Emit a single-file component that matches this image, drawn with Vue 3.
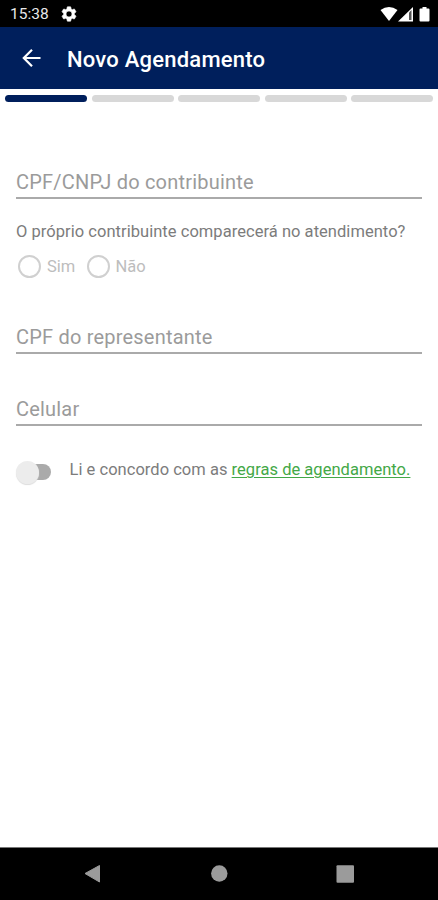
<template>
  <div class="screen">
    <div class="status">
      <span class="time">15:38</span>
      <svg class="gear" width="18" height="18" viewBox="0 0 24 24">
        <path fill="#fff" stroke="#fff" stroke-width=".8" d="M19.14 12.94c.04-.3.06-.61.06-.94s-.02-.64-.07-.94l2.03-1.58a.49.49 0 0 0 .12-.61l-1.92-3.32a.49.49 0 0 0-.59-.22l-2.39.96a7 7 0 0 0-1.62-.94l-.36-2.54a.48.48 0 0 0-.48-.41h-3.84a.47.47 0 0 0-.47.41l-.36 2.54c-.59.24-1.13.57-1.62.94l-2.39-.96a.48.48 0 0 0-.59.22L2.74 8.87a.48.48 0 0 0 .12.61l2.03 1.58c-.05.3-.09.63-.09.94s.02.64.07.94l-2.03 1.58a.49.49 0 0 0-.12.61l1.92 3.32c.12.22.37.29.59.22l2.39-.96c.5.38 1.03.7 1.62.94l.36 2.54c.05.24.24.41.48.41h3.84c.24 0 .44-.17.47-.41l.36-2.54a7 7 0 0 0 1.62-.94l2.39.96c.22.08.47 0 .59-.22l1.92-3.32a.47.47 0 0 0-.12-.61zM12 16a4 4 0 1 1 0-8 4 4 0 0 1 0 8z" />
      </svg>
      <svg class="signals" width="52" height="18" viewBox="0 0 52 18">
        <path fill="#fff" d="M.5 5Q9 -1.200 17.500 5L9 16z" />
        <path fill="#fff" d="M18 16.500 33 2v14.500z" />
        <path fill="#555" d="M29 7.500 31.500 5V15H29z" />
        <path fill="#fff" d="M40.500 3.500h2V2h4v1.500h2q1 0 1 1v11q0 1-1 1h-8q-1 0-1-1v-11q0-1 1-1z" />
      </svg>
    </div>
    <header class="toolbar">
      <svg class="back" width="20" height="20" viewBox="0 0 20 20">
        <path d="M18.500 10H2M10 1.800 1.800 10l8.200 8.200" fill="none" stroke="#fff" stroke-width="2.200" />
      </svg>
      <h1>Novo Agendamento</h1>
    </header>
    <div class="steps">
      <i v-for="n in 5" :key="n" :class="{ active: n === step }"></i>
    </div>
    <main class="form">
      <div class="field"><span>CPF/CNPJ do contribuinte</span></div>
      <p class="question">O próprio contribuinte comparecerá no atendimento?</p>
      <div class="radios">
        <div v-for="o in options" :key="o" class="radio"><i></i><span>{{ o }}</span></div>
      </div>
      <div class="field second"><span>CPF do representante</span></div>
      <div class="field third"><span>Celular</span></div>
      <div class="terms">
        <div class="switch"><i></i></div>
        <p>Li e concordo com as <a>regras de agendamento.</a></p>
      </div>
    </main>
    <nav class="navbar">
      <svg width="438" height="52" viewBox="0 0 438 52">
        <path fill="#9b9b9b" stroke="#9b9b9b" stroke-linejoin="round" d="M85 25.500 99.500 17.500v16.500z" />
        <circle fill="#9b9b9b" cx="219.300" cy="25.500" r="8.200" />
        <rect fill="#9b9b9b" x="336.500" y="17.300" width="17.500" height="17.500" rx="1" />
      </svg>
    </nav>
  </div>
</template>

<script setup>
import { ref } from 'vue'
const step = ref(1)
const options = ['Sim', 'Não']
</script>

<style>
body { margin: 0; background: #fff; }
</style>

<style scoped>
.screen { width: 438px; height: 900px; display: flex; flex-direction: column; overflow: hidden; background: #fff; font-family: Roboto, "Liberation Sans", sans-serif; }
.status { height: 27px; flex: none; display: flex; align-items: center; box-sizing: border-box; padding: 1px 6px 0 10px; background: #000; color: #e8e8e8; }
.time { width: 49.500px; font-size: 15.500px; line-height: 20px; white-space: nowrap; }
.gear { display: block; }
.signals { display: block; margin-left: auto; }
.toolbar { height: 62px; flex: none; display: flex; align-items: center; box-sizing: border-box; padding: 3px 0 0 22px; background: #001f5c; }
.back { display: block; margin-top: -3px; }
h1 { margin: 1px 0 0 25px; color: #fff; font-size: 22px; font-weight: 500; line-height: 28px; letter-spacing: 0.220px; white-space: nowrap; }
.steps { display: flex; flex: none; gap: 4.500px; height: 7px; padding: 6px 4.500px 0 5px; }
.steps i { flex: 1; border-radius: 4px; background: #d8d8d8; }
.steps i.active { background: #001f5c; }
.form { flex: 1; padding: 62px 16px 0; }
.field { height: 33px; border-bottom: 2px solid #aaa; color: #9b9b9b; font-size: 20px; line-height: 36px; white-space: nowrap; letter-spacing: 0.200px; }
.question { margin: 21px 0 0; height: 24px; color: #7c7c7c; font-size: 16.500px; line-height: 24px; letter-spacing: 0.040px; white-space: nowrap; }
.radios { display: flex; margin-top: 10px; height: 24px; padding-left: 2px; }
.radio { display: flex; align-items: center; width: 68.500px; color: #bdbdbd; font-size: 16.500px; }
.radio i { width: 19px; height: 19px; border: 2px solid #d0d0d0; border-radius: 50%; margin-right: 6px; }
.second { margin-top: 41px; }
.third { margin-top: 37px; }
.terms { display: flex; margin-top: 31px; height: 26px; }
.terms p { margin: 1px 0 0 18.500px; color: #7c7c7c; font-size: 16.500px; line-height: 24px; letter-spacing: 0.030px; white-space: nowrap; }
.terms a { color: #43a847; text-decoration: underline; text-underline-offset: 2px; text-decoration-thickness: 1px; }
.switch { display: flex; align-items: center; width: 35px; height: 16px; margin-top: 7px; border-radius: 8px; background: linear-gradient(90deg, transparent 16px, #aaa 16px); }
.switch i { flex: none; width: 23px; height: 23px; border-radius: 50%; background: #ececec; box-shadow: 0 1px 1px #ddd; }
.navbar { height: 53px; flex: none; box-sizing: border-box; border-top: 1px solid #777; background: #000; }
.navbar svg { display: block; }
</style>
